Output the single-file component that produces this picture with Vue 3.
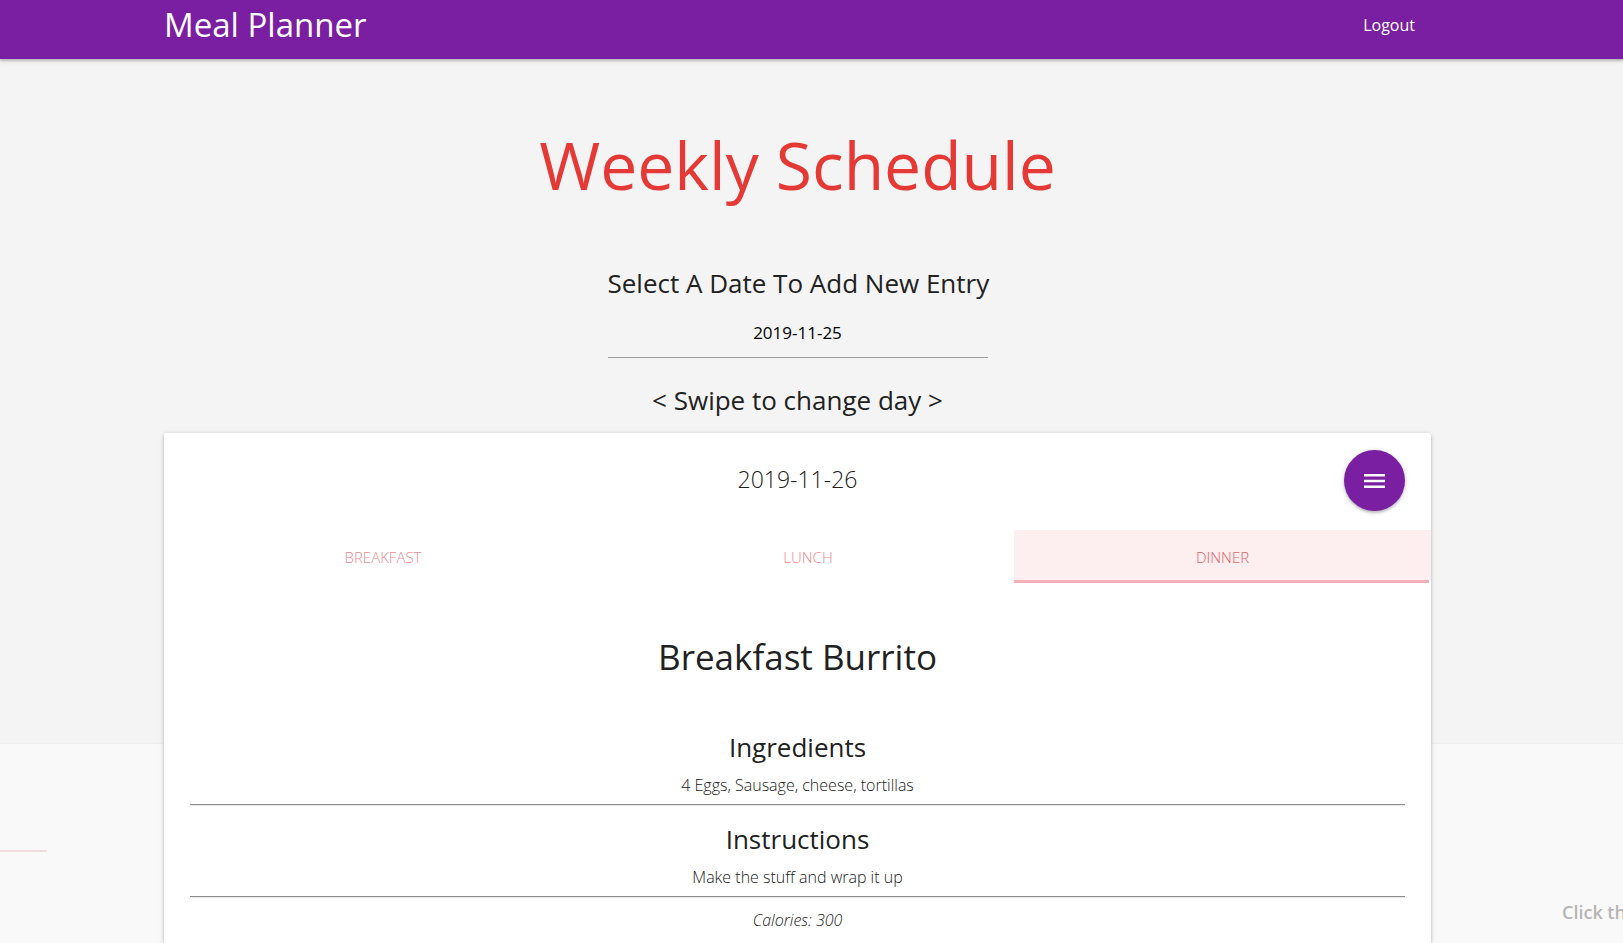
<script setup>
import { ref } from 'vue'

const entryDate = ref('2019-11-25')
const meals = ['Breakfast', 'Lunch', 'Dinner']
const activeMeal = ref('Dinner')
const recipe = {
  name: 'Breakfast Burrito',
  ingredients: '4 Eggs, Sausage, cheese, tortillas',
  instructions: 'Make the stuff and wrap it up',
  calories: 300,
}
</script>

<template>
  <div class="page">
    <header class="navbar">
      <a class="brand" href="#">Meal Planner</a>
      <nav><a class="logout" href="#">Logout</a></nav>
    </header>

    <main>
      <h1>Weekly Schedule</h1>
      <div class="picker">
        <label class="prompt" for="entry-date">Select A Date To Add New Entry</label>
        <input id="entry-date" v-model="entryDate" type="text" />
      </div>
      <p class="prompt swipe">&lt; Swipe to change day &gt;</p>

      <div class="carousel">
        <div class="neighbour previous"><span class="indicator"></span></div>
        <div class="neighbour next"><p class="hint">Click th</p></div>

        <section class="card">
          <div class="card-head">
            <h2>2019-11-26</h2>
            <button class="fab" type="button" aria-label="Menu">
              <svg viewBox="0 0 21 14" width="21" height="14" aria-hidden="true">
                <path d="M0 0h21v2.6H0zM0 5.7h21v2.6H0zM0 11.4h21V14H0z" fill="#fff" />
              </svg>
            </button>
          </div>

          <div class="tabs" role="tablist">
            <button
              v-for="meal in meals"
              :key="meal"
              type="button"
              role="tab"
              class="tab"
              :class="{ active: meal === activeMeal }"
              :aria-selected="meal === activeMeal"
              @click="activeMeal = meal"
            >{{ meal }}</button>
          </div>

          <div class="recipe">
            <h3>{{ recipe.name }}</h3>
            <h4>Ingredients</h4>
            <p>{{ recipe.ingredients }}</p>
            <hr />
            <h4>Instructions</h4>
            <p>{{ recipe.instructions }}</p>
            <hr />
            <p class="calories">Calories: {{ recipe.calories }}</p>
          </div>
        </section>
      </div>
    </main>
  </div>
</template>

<style>
body {
  margin: 0;
  background: #f4f4f4;
}
</style>

<style scoped>
.page {
  display: flex;
  flex-direction: column;
  min-height: 100vh;
  font-family: "Open Sans", "Noto Sans", sans-serif;
  font-size: 16px;
  color: #212121;
}
h1, h2, h3, h4, p {
  margin: 0;
  font-weight: 400;
}
.navbar {
  display: flex;
  justify-content: space-between;
  align-items: center;
  box-sizing: border-box;
  height: 59px;
  padding: 0 208px 9px 164px;
  background: #7b1fa2;
  box-shadow: 0 2px 2px rgba(0, 0, 0, 0.14), 0 1px 5px rgba(0, 0, 0, 0.2);
  z-index: 1;
}
.navbar a {
  color: #fff;
  text-decoration: none;
}
.brand {
  font-size: 33px;
  line-height: 50px;
}
main {
  flex: 1;
  display: flex;
  flex-direction: column;
  align-items: center;
  padding-top: 59px;
}
h1,
.picker,
.swipe {
  margin-right: 28px;
}
h1 {
  font-size: 66px;
  line-height: 92px;
  color: #e53935;
}
.picker {
  display: flex;
  flex-direction: column;
  width: 380px;
  margin-top: 55px;
}
.prompt {
  font-size: 26px;
  line-height: 36px;
  text-align: center;
  white-space: nowrap;
}
input {
  height: 50px;
  margin-top: 7px;
  padding: 0;
  box-sizing: border-box;
  border: 0;
  border-bottom: 1px solid #9e9e9e;
  background: transparent;
  font: 400 17px "Open Sans", "Noto Sans", sans-serif;
  color: #000;
  text-align: center;
  outline: 0;
}
.swipe {
  margin-top: 24px;
  margin-bottom: 15px;
}
.carousel {
  position: relative;
  flex: 1;
  display: flex;
  align-self: stretch;
  padding: 0 192px 0 164px;
  overflow-x: clip;
}
.neighbour {
  position: absolute;
  top: 311px;
  bottom: 0;
  background: #f9f9f9;
  box-shadow: 0 0 2px rgba(0, 0, 0, 0.08);
}
.previous {
  left: 0;
  width: 164px;
}
.next {
  right: 0;
  width: 192px;
}
.indicator {
  display: block;
  width: 47px;
  height: 2px;
  margin-top: 106px;
  background: #f1dde0;
}
.hint {
  margin: 156px 0 0 131px;
  font-size: 18px;
  line-height: 24px;
  font-weight: 600;
  color: #b5b5b5;
  white-space: nowrap;
}
.card {
  position: relative;
  flex: 1;
  border-radius: 2px 2px 0 0;
  background: #fff;
  text-align: center;
  box-shadow: 0 2px 2px rgba(0, 0, 0, 0.14), 0 1px 5px rgba(0, 0, 0, 0.2);
}
.card-head {
  display: grid;
  grid-template-columns: 1fr auto 1fr;
  align-items: center;
  height: 95px;
  padding: 0 26px 2px;
}
h2 {
  grid-column: 2;
  padding-bottom: 4px;
  font-size: 23px;
  line-height: 34px;
  font-weight: 300;
}
.fab {
  justify-self: end;
  display: flex;
  align-items: center;
  justify-content: center;
  width: 61px;
  height: 61px;
  padding: 0;
  border: 0;
  border-radius: 50%;
  background: #7b1fa2;
  box-shadow: 0 2px 2px rgba(0, 0, 0, 0.14), 0 1px 5px rgba(0, 0, 0, 0.2);
}
.tabs {
  display: flex;
}
.tab {
  position: relative;
  flex: 412 1 0;
  height: 53px;
  padding: 0;
  border: 0;
  background: transparent;
  font: 300 15px "Open Sans", "Noto Sans", sans-serif;
  color: #e88a8e;
  text-transform: uppercase;
}
.tab:first-child {
  flex-grow: 438;
}
.tab:last-child {
  flex-grow: 417;
}
.tab.active {
  background: linear-gradient(#fdeeef, #fdeeef) top / 100% 50px no-repeat;
  color: #e0606a;
}
.tab.active::after {
  content: "";
  position: absolute;
  left: 0;
  right: 2px;
  bottom: 0;
  height: 3px;
  background: #f0b2b7;
}
.recipe {
  padding: 0 26px;
}
h3 {
  margin: 46px 0 44px;
  font-size: 35px;
  line-height: 56px;
}
h4 {
  font-size: 26px;
  line-height: 36px;
}
.recipe p {
  margin-top: 8px;
  font-size: 16px;
  line-height: 24px;
  font-weight: 300;
}
hr {
  margin: 7px 0 15px;
  border: 0;
  border-top: 1px solid #8f8f8f;
  border-bottom: 1px solid #e8e8e8;
}
.recipe .calories {
  margin-top: -5px;
  font-style: italic;
}
</style>
